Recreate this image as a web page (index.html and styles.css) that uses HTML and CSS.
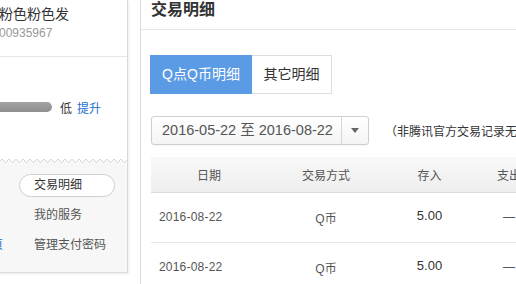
FILE: index.html
```html
<!DOCTYPE html>
<html lang="zh">
<head>
<meta charset="utf-8">
<link rel="stylesheet" href="styles.css">
</head>
<body>
<div class="page">
  <aside class="side">
    <div class="side-top">
      <div class="nick">粉色粉色发</div>
      <div class="qq">00935967</div>
    </div>
    <div class="side-mid">
      <div class="level">
        <span class="bar"></span>
        <span class="lv">低</span>
        <a class="up">提升</a>
      </div>
    </div>
    <div class="zig"></div>
    <div class="side-bottom">
      <span class="lnk"></span>
      <a class="menu-item active">交易明细</a>
      <span class="lnk"></span>
      <a class="menu-item">我的服务</a>
      <a class="lnk">首页</a>
      <a class="menu-item">管理支付密码</a>
    </div>
  </aside>
  <main class="main">
    <h1 class="title">交易明细</h1>
    <div class="tabs">
      <a class="tab on">Q点Q币明细</a>
      <a class="tab">其它明细</a>
    </div>
    <div class="controls">
      <div class="picker">
        <span class="range">2016-05-22 至 2016-08-22</span>
        <span class="caret"><i></i></span>
      </div>
      <span class="note">（非腾讯官方交易记录无法查询）</span>
    </div>
    <table class="grid">
      <colgroup>
        <col class="c1"><col class="c2"><col class="c3"><col class="c4">
      </colgroup>
      <thead>
        <tr><th>日期</th><th>交易方式</th><th>存入</th><th>支出</th></tr>
      </thead>
      <tbody>
        <tr><td class="d">2016-08-22</td><td>Q币</td><td class="amt">5.00</td><td>—</td></tr>
        <tr><td class="d">2016-08-22</td><td>Q币</td><td class="amt">5.00</td><td>—</td></tr>
      </tbody>
    </table>
  </main>
</div>
</body>
</html>
```

FILE: styles.css
```css
* { box-sizing: border-box; }
html, body { margin: 0; padding: 0; background: #fff; }
body {
  font-family: "Liberation Sans", "Noto Sans CJK SC", sans-serif;
  color: #333;
  width: 516px;
  height: 284px;
  overflow: hidden;
}
a { text-decoration: none; }

.page { display: flex; align-items: flex-start; height: 284px; }

/* ---------- side panel ---------- */
.side {
  flex: none;
  width: 168px;
  margin-left: -40px;
  border-right: 1px solid #d9d9d9;
  border-bottom: 1px solid #dcdcdc;
  box-shadow: 1px 1px 2px rgba(0,0,0,0.08);
  background: #fff;
}
.side-top {
  height: 57px;
  padding: 5px 0 0 39px;
  border-bottom: 1px solid #e6e6e6;
}
.nick { font-size: 14px; line-height: 18px; color: #333; }
.qq { font-size: 12px; line-height: 14px; margin-top: 3px; color: #999; }

.side-mid { height: 101px; padding-top: 40px; }
.level { display: flex; align-items: center; height: 20px; font-size: 12px; }
.bar {
  width: 92px; height: 10px; border-radius: 5px;
  background: linear-gradient(#a3a3a3, #8f8f8f);
}
.lv { margin-left: 8px; color: #333; }
.up { margin-left: 5px; color: #1a6ec8; }

.zig {
  height: 6px;
  background:
    linear-gradient(-45deg, #f7f7f7 3.5px, transparent 0) 0 100% / 7px 7px repeat-x,
    linear-gradient(45deg, #f7f7f7 3.5px, transparent 0) 0 100% / 7px 7px repeat-x,
    linear-gradient(-45deg, #d6d6d6 3.5px, transparent 0) 0 calc(100% - 1px) / 7px 7px repeat-x,
    linear-gradient(45deg, #d6d6d6 3.5px, transparent 0) 0 calc(100% - 1px) / 7px 7px repeat-x,
    #fff;
}
.side-bottom {
  background: #f7f7f7;
  padding: 10px 0 15px;
  display: grid;
  grid-template-columns: 43px 96px;
  grid-auto-rows: 23px;
  column-gap: 16px;
  row-gap: 7px;
  font-size: 12px;
}
.lnk { color: #1a6ec8; text-align: right; line-height: 23px; }
.menu-item {
  line-height: 21px;
  border: 1px solid transparent;
  padding-left: 14px;
  color: #555;
  white-space: nowrap;
}
.menu-item.active {
  border-color: #cfcfcf;
  border-radius: 12px;
  background: #fff;
  color: #333;
}

/* ---------- main ---------- */
.main {
  flex: 1;
  min-width: 0;
  margin-left: 12px;
  height: 284px;
  border-left: 1px solid #dcdcdc;
  overflow: hidden;
}
.title {
  margin: 0;
  height: 30px;
  padding-left: 10px;
  border-bottom: 1px solid #e6e6e6;
  font-size: 16px;
  font-weight: bold;
  line-height: 19px;
  color: #333;
}
.tabs { display: flex; margin: 25px 0 0 9px; }
.tab {
  height: 39px;
  line-height: 37px;
  text-align: center;
  font-size: 14px;
  color: #333;
  border: 1px solid #ddd;
}
.tab.on { width: 102px; background: #5b9be6; border-color: #5b9be6; color: #fff; }
.tab + .tab { width: 80px; border-left: 0; }

.controls { display: flex; align-items: center; margin: 22px 0 0 10px; }
.picker {
  flex: none;
  display: flex;
  width: 218px;
  height: 29px;
  border: 1px solid #cfcfcf;
  border-radius: 3px;
  background: linear-gradient(#fff, #f4f4f4);
  box-shadow: 0 1px 1px rgba(0,0,0,0.04);
}
.range {
  width: 190px;
  padding-left: 10px;
  border-right: 1px solid #d6d6d6;
  font-size: 14.5px;
  line-height: 27px;
  color: #555;
  white-space: nowrap;
}
.caret { flex: 1; display: flex; align-items: center; justify-content: center; }
.caret i {
  width: 0; height: 0;
  border-left: 4.5px solid transparent;
  border-right: 4.5px solid transparent;
  border-top: 5px solid #666;
}
.note { margin-left: 16px; font-size: 12px; color: #333; white-space: nowrap; }

.grid {
  margin: 12px 0 0 10px;
  border-collapse: collapse;
  table-layout: fixed;
  width: 393px;
  font-size: 12px;
}
.c1 { width: 116px; } .c2 { width: 118px; } .c3 { width: 89px; } .c4 { width: 70px; }
.grid th {
  height: 35px;
  padding: 0;
  font-weight: normal;
  color: #555;
  background: linear-gradient(#f8f8f8, #eeeeee);
  border-bottom: 1px solid #dcdcdc;
}
.grid td {
  height: 50px;
  padding: 0;
  text-align: center;
  color: #555;
  border-bottom: 1px solid #e6e6e6;
}
.grid td.d { text-align: left; padding-left: 8px; letter-spacing: 0.2px; }
.grid td.amt { font-size: 13px; color: #333; padding-bottom: 4px; }
```
